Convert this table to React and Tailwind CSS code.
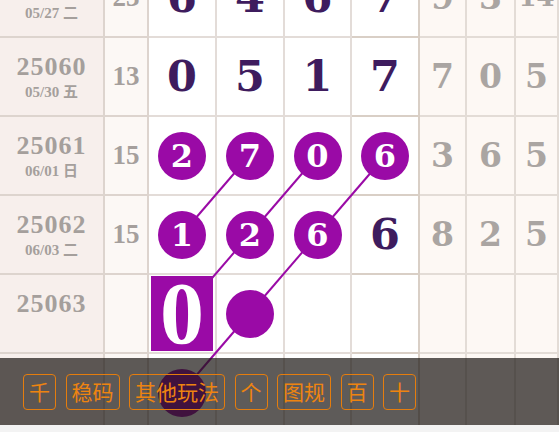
import React from "react";

const BALL = "#9a0aa6";

// One row per draw: [period, date, sum, main cells, right cells]
// main cell: { n, kind } where kind = plain | ball | square | dot
const rows = [
    { period: "25059", date: "05/27 二", sum: "23", main: [{ n: "6" }, { n: "4" }, { n: "6" }, { n: "7" }], right: ["9", "3", "14"] },
    { period: "25060", date: "05/30 五", sum: "13", main: [{ n: "0" }, { n: "5" }, { n: "1" }, { n: "7" }], right: ["7", "0", "5"] },
    { period: "25061", date: "06/01 日", sum: "15", main: [{ n: "2", kind: "ball" }, { n: "7", kind: "ball" }, { n: "0", kind: "ball" }, { n: "6", kind: "ball" }], right: ["3", "6", "5"] },
    { period: "25062", date: "06/03 二", sum: "15", main: [{ n: "1", kind: "ball" }, { n: "2", kind: "ball" }, { n: "6", kind: "ball" }, { n: "6" }], right: ["8", "2", "5"] },
    { period: "25063", date: "", sum: "", main: [{ n: "0", kind: "square" }, { kind: "dot" }, {}, {}], right: ["", "", ""] },
    { period: "", date: "", sum: "", main: [{ kind: "dot" }, {}, {}, {}], right: ["", "", ""] },
];

const buttons = ["千", "稳码", "其他玩法", "个", "图规", "百", "十"];

const MainCell = ({ cell }) => {
    if (cell.kind === "ball") {
        return (
            <div className="relative z-10 flex h-[48px] w-[48px] items-center justify-center rounded-full bg-[#9a0aa6] text-[32px] font-bold leading-none text-white [font-family:'DejaVu_Serif',serif]">
                {cell.n}
            </div>
        );
    }
    if (cell.kind === "square") {
        return (
            <div className="relative z-10 flex h-[75px] w-[62px] items-center justify-center bg-[#9a0aa6] text-[88px] font-bold leading-none text-white [font-family:'Liberation_Serif',serif]">
                {cell.n}
            </div>
        );
    }
    if (cell.kind === "dot") {
        return <div className="relative z-10 h-[48px] w-[48px] rounded-full bg-[#9a0aa6]" />;
    }
    return (
        <span className="text-[43px] font-bold leading-none text-[#3e1c5e] [font-family:'DejaVu_Serif',serif]">
            {cell.n}
        </span>
    );
};

export default function App() {
    return (
        <div className="relative h-[432px] w-[559px] overflow-hidden bg-white">
            {/* Trend table, scrolled so the first row is cut */}
            <div className="-mt-[41px] grid grid-cols-[105px_44px_68px_68px_67px_68px_47px_49px_43px]">
                {rows.map((row, i) => (
                    <React.Fragment key={i}>
                        <div className="flex h-[79px] flex-col items-center justify-center border-b-2 border-r-2 border-[#ddd4ce] bg-[#f7efec] text-[#a59f9c] [font-family:'Liberation_Serif','Noto_Sans_CJK_SC',serif]">
                            <span className="text-[26px] font-bold leading-[27px] tracking-[1px]">{row.period}</span>
                            <span className="mt-[3px] h-[18px] text-[15px] font-bold leading-[18px]">{row.date}</span>
                        </div>
                        <div className="flex h-[79px] items-center justify-center border-b-2 border-r-2 border-[#ddd4ce] bg-[#fcf8f5] text-[27px] font-bold text-[#a59f9c] [font-family:'Liberation_Serif',serif]">
                            {row.sum}
                        </div>
                        {row.main.map((cell, j) => (
                            <div
                                key={j}
                                className={`flex h-[79px] items-center justify-center border-b-2 border-r-2 bg-white ${j === 3 ? "border-[#d9cfc6]" : "border-[#e3dcd8]"}`}
                            >
                                <MainCell cell={cell} />
                            </div>
                        ))}
                        {row.right.map((n, j) => (
                            <div
                                key={j}
                                className="flex h-[79px] items-center justify-center border-b-2 border-r-2 border-[#e3dcd6] bg-[#fdf8f4] text-[33px] font-bold text-[#aaa5a2] [font-family:'DejaVu_Serif',serif]"
                            >
                                <span className={n.length > 1 ? "text-[26px]" : ""}>{n}</span>
                            </div>
                        ))}
                    </React.Fragment>
                ))}
            </div>

            {/* Connecting lines of the ball chains */}
            <svg className="absolute left-0 top-0" width="559" height="432">
                <g stroke={BALL} strokeWidth="2">
                    <line x1="182" y1="234" x2="250" y2="155" />
                    <line x1="250" y1="234" x2="318" y2="155" />
                    <line x1="318" y1="234" x2="386" y2="155" />
                    <line x1="182" y1="313" x2="250" y2="234" />
                    <line x1="250" y1="313" x2="318" y2="234" />
                    <line x1="182" y1="392" x2="250" y2="313" />
                </g>
            </svg>

            {/* Bottom tool bar */}
            <div className="absolute bottom-0 left-0 z-20 w-full">
                <div className="flex h-[67px] items-center gap-[9.5px] bg-[rgba(25,22,19,0.7)] pl-[23px]">
                    {buttons.map((b) => (
                        <div
                            key={b}
                            className="flex h-[36px] items-center rounded-[4px] border border-[#e57d0d] px-[5px] text-[21px] leading-none text-[#ee8410] [font-family:'Noto_Sans_CJK_SC',sans-serif]"
                        >
                            {b}
                        </div>
                    ))}
                </div>
                <div className="h-[7px] bg-[#f3f3f3]" />
            </div>
        </div>
    );
}
